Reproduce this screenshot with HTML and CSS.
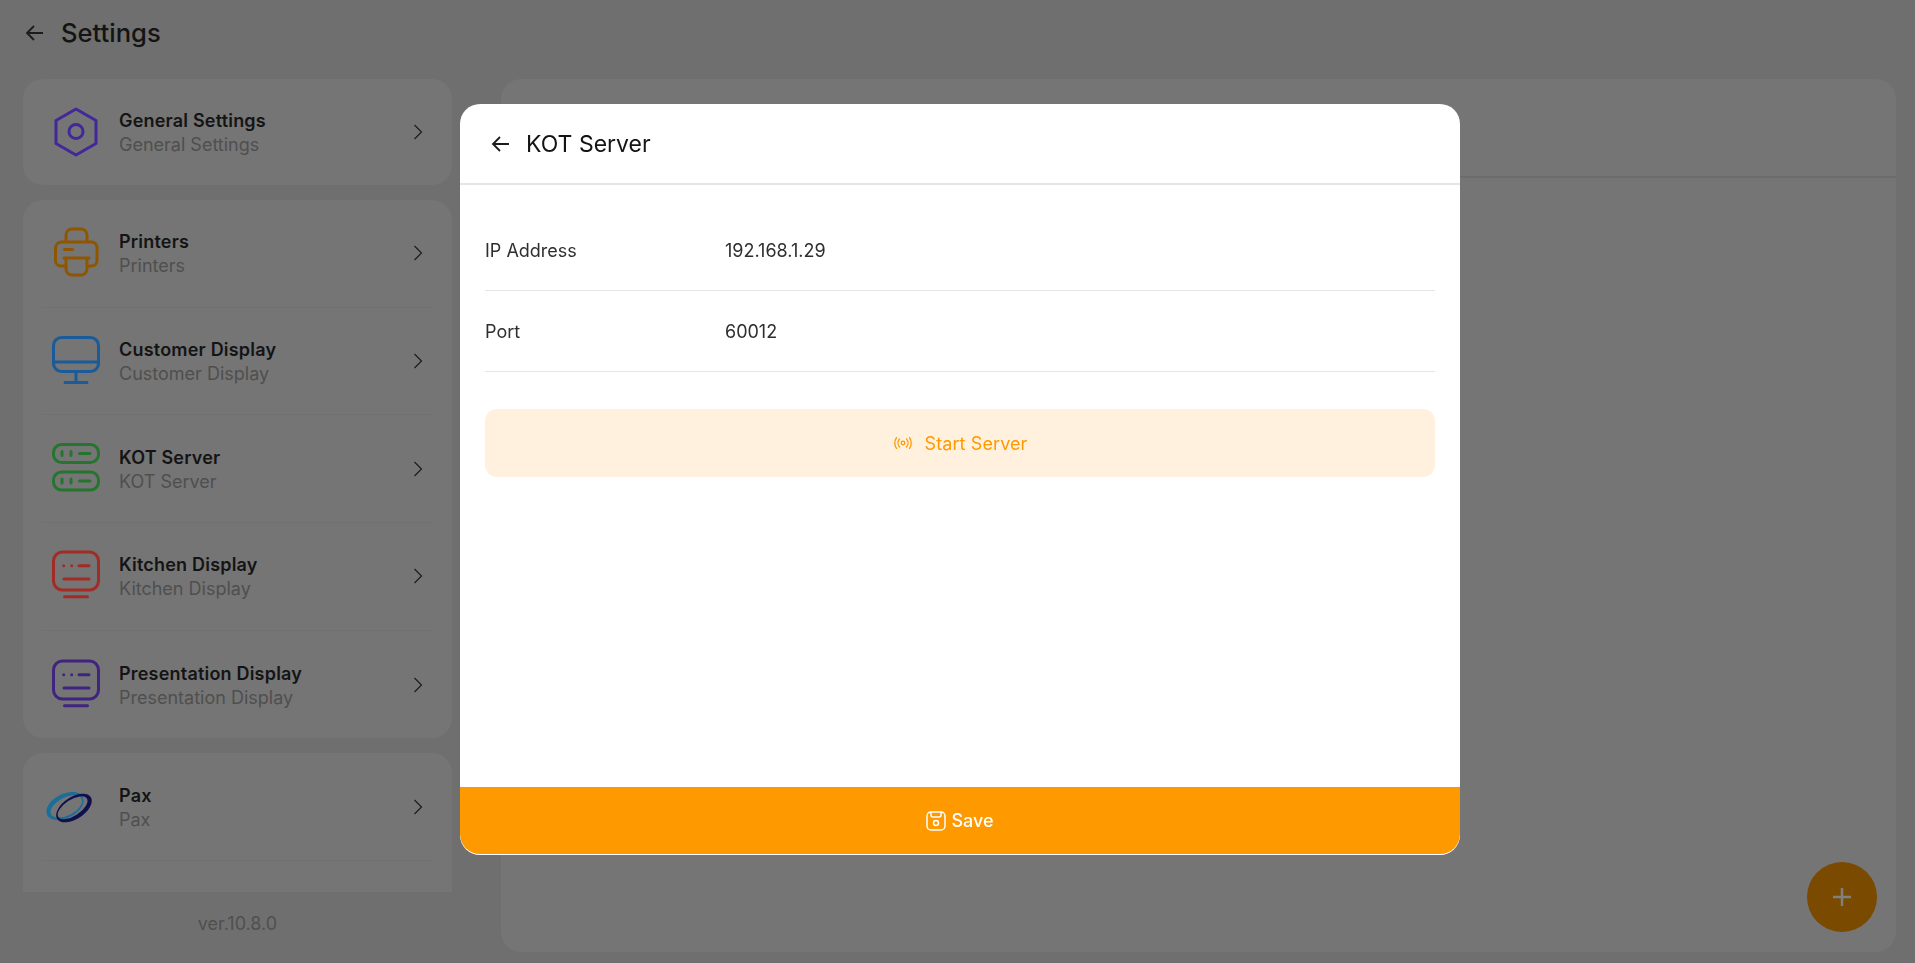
FILE: index.html
```html
<!DOCTYPE html>
<html lang="en">
<head>
    <meta charset="UTF-8">
    <meta name="viewport" content="width=device-width, initial-scale=1.0">
    <title>Settings</title>
    <link rel="stylesheet" href="styles.css">
</head>
<body>
    <div class="page">
        <header class="topbar">
            <svg class="back-icon" viewBox="0 0 24 24"><path d="M20 12H4M11 5l-7 7 7 7"/></svg>
            <h1>Settings</h1>
        </header>
        <div class="content">
            <aside class="sidebar">
                <div class="sidebar-scroll">
                    <div class="card">
                        <div class="item">
                            <svg class="item-icon icon-purple" viewBox="0 0 48 48"><path d="M24 1l20 11.500v23L24 47 4 35.500v-23z"/><circle cx="24" cy="23.500" r="7"/></svg>
                            <div class="item-text"><strong>General Settings</strong><span>General Settings</span></div>
                            <svg class="chevron" viewBox="0 0 10 16"><path d="M1.500 1l7 7-7 7"/></svg>
                        </div>
                    </div>
                    <div class="card">
                        <div class="item">
                            <svg class="item-icon icon-orange" viewBox="0 0 48 48"><path d="M14 13V6a6 6 0 0 1 6-6h9a6 6 0 0 1 6 6v7M14 37H9a5.500 5.500 0 0 1-5.500-5.500V19A6 6 0 0 1 9 13h31a5.500 5.500 0 0 1 5 6v12.500a5.500 5.500 0 0 1-5.500 5.500H35M12 29h25M14 29v11a6 6 0 0 0 6 6h9a6 6 0 0 0 6-6V29M12.500 20.500h8"/></svg>
                            <div class="item-text"><strong>Printers</strong><span>Printers</span></div>
                            <svg class="chevron" viewBox="0 0 10 16"><path d="M1.500 1l7 7-7 7"/></svg>
                        </div>
                        <div class="item">
                            <svg class="item-icon icon-blue" viewBox="0 0 48 48"><rect x="1.500" y=".5" width="45" height="34" rx="8"/><path d="M1.500 25h45M24 35v10M13 45.500h22"/></svg>
                            <div class="item-text"><strong>Customer Display</strong><span>Customer Display</span></div>
                            <svg class="chevron" viewBox="0 0 10 16"><path d="M1.500 1l7 7-7 7"/></svg>
                        </div>
                        <div class="item">
                            <svg class="item-icon icon-green" viewBox="0 0 48 48"><rect x="1.500" y="-.5" width="45" height="18" rx="8"/><rect x="1.500" y="27" width="45" height="18" rx="8"/><path d="M10 6.500v4M19 6.500v4M27.500 8.500h10.500M10 34v4M19 34v4M27.500 36h10.500"/></svg>
                            <div class="item-text"><strong>KOT Server</strong><span>KOT Server</span></div>
                            <svg class="chevron" viewBox="0 0 10 16"><path d="M1.500 1l7 7-7 7"/></svg>
                        </div>
                        <div class="item">
                            <svg class="item-icon icon-red" viewBox="0 0 48 48"><rect x="1.500" y="0" width="45" height="38" rx="9"/><path d="M11.700 13.700h.01M19.700 13.700h.01M27 13.700h10M12 27h25M12.500 44.700h23"/></svg>
                            <div class="item-text"><strong>Kitchen Display</strong><span>Kitchen Display</span></div>
                            <svg class="chevron" viewBox="0 0 10 16"><path d="M1.500 1l7 7-7 7"/></svg>
                        </div>
                        <div class="item">
                            <svg class="item-icon icon-indigo" viewBox="0 0 48 48"><rect x="1.500" y="0" width="45" height="38" rx="9"/><path d="M11.700 13.700h.01M19.700 13.700h.01M27 13.700h10M12 27h25M12.500 44.700h23"/></svg>
                            <div class="item-text"><strong>Presentation Display</strong><span>Presentation Display</span></div>
                            <svg class="chevron" viewBox="0 0 10 16"><path d="M1.500 1l7 7-7 7"/></svg>
                        </div>
                    </div>
                    <div class="card">
                        <div class="item">
                            <svg class="item-icon pax-logo" viewBox="0 0 48 48">
                                <path class="pax-teal" transform="translate(13 23) rotate(-27)" d="M-20 0a20 12 0 1 0 40 0a20 12 0 1 0-40 0zM-16 1a17 9 0 1 0 34 0a17 9 0 1 0-34 0z"/>
                                <path class="pax-navy" transform="translate(22 25) rotate(-33)" d="M-20 0a20 11 0 1 0 40 0a20 11 0 1 0-40 0zM-18-1a17 8 0 1 0 34 0a17 8 0 1 0-34 0z"/>
                            </svg>
                            <div class="item-text"><strong>Pax</strong><span>Pax</span></div>
                            <svg class="chevron" viewBox="0 0 10 16"><path d="M1.500 1l7 7-7 7"/></svg>
                        </div>
                        <div class="item"></div>
                    </div>
                </div>
                <div class="version">ver.10.8.0</div>
            </aside>
            <main class="panel">
                <div class="panel-head"></div>
                <button class="fab"><svg viewBox="0 0 20 20"><path d="M10 1v18M1 10h18"/></svg></button>
            </main>
        </div>
    </div>

    <div class="overlay">
        <div class="modal">
            <div class="modal-head">
                <svg class="back-icon" viewBox="0 0 24 24"><path d="M20 12H4M11 5l-7 7 7 7"/></svg>
                <h2>KOT Server</h2>
            </div>
            <div class="modal-body">
                <div class="field"><label>IP Address</label><span>192.168.1.29</span></div>
                <div class="field"><label>Port</label><span>60012</span></div>
                <button class="start-btn">
                    <svg viewBox="0 0 20 12"><circle cx="10" cy="6" r="1.800"/><path d="M6.500 2a6 6 0 0 0 0 8M13.500 2a6 6 0 0 1 0 8M3.500.6a10 10 0 0 0 0 10.800M16.500.6a10 10 0 0 1 0 10.800"/></svg>
                    Start Server
                </button>
            </div>
            <button class="save-btn">
                <svg viewBox="0 0 20 20"><rect x="1" y="1" width="18" height="18" rx="4"/><path d="M5 1v3a2 2 0 0 0 2 2h6a2 2 0 0 0 2-2V1"/><circle cx="10" cy="12" r="2.500"/></svg>
                Save
            </button>
        </div>
    </div>
</body>
</html>
```

FILE: styles.css
```css
* {
    box-sizing: border-box;
}
body {
    margin: 0;
    height: 963px;
    overflow: hidden;
    font-family: Inter, "Liberation Sans", sans-serif;
    background-color: #6f6f6f;
    color: #141414;
}
.page {
    height: 100%;
    display: flex;
    flex-direction: column;
}
.topbar {
    height: 79px;
    padding: 0 0 14px 23px;
    display: flex;
    align-items: center;
    gap: 14px;
}
.topbar h1 {
    margin: 0;
    font-size: 25.600px;
    font-weight: 500;
}
.back-icon {
    width: 24px;
    height: 24px;
    fill: none;
    stroke: #1c1c1e;
    stroke-width: 1.800;
}
.content {
    flex: 1;
    display: flex;
    padding: 0 19px 11px 23px;
    gap: 49px;
    min-height: 0;
}
.sidebar {
    width: 429px;
    display: flex;
    flex-direction: column;
}
.sidebar-scroll {
    height: 813px;
    overflow: hidden;
    display: flex;
    flex-direction: column;
    gap: 15px;
}
.card {
    background-color: #757575;
    border-radius: 20px;
    flex-shrink: 0;
}
.item {
    height: 107.700px;
    margin: 0 19px;
    padding: 0 10px;
    display: flex;
    align-items: center;
    border-bottom: 1px solid #707070;
}
.card > .item:last-child {
    border-bottom: none;
}
.card:first-child .item {
    height: 106px;
}
.item-icon {
    width: 48px;
    height: 48px;
    flex-shrink: 0;
    fill: none;
    stroke-width: 3;
    stroke-linecap: round;
    stroke-linejoin: round;
    overflow: visible;
}
.icon-purple { stroke: #43289a; }
.icon-orange { stroke: #8f5600; }
.icon-blue { stroke: #1b5b99; }
.icon-green { stroke: #26752f; }
.icon-red { stroke: #a32b25; }
.icon-indigo { stroke: #3f2480; }
.pax-teal { fill: #1a6f9a; fill-rule: evenodd; stroke: none; }
.pax-navy { fill: #10104f; fill-rule: evenodd; stroke: none; }
.item-text {
    flex: 1;
    margin-left: 19px;
    padding-top: 2px;
    display: flex;
    flex-direction: column;
}
.item-text strong {
    font-size: 18px;
    font-weight: 600;
    letter-spacing: 0.2px;
    line-height: 24px;
}
.item-text span {
    font-size: 18px;
    line-height: 24px;
    color: #4f4f4f;
}
.chevron {
    width: 10px;
    height: 16px;
    fill: none;
    stroke: #1c1c1e;
    stroke-width: 1.200;
}
.version {
    flex: 1;
    padding-top: 2px;
    display: flex;
    align-items: center;
    justify-content: center;
    font-size: 18px;
    color: #4f4f4f;
}
.panel {
    flex: 1;
    background-color: #757575;
    border-radius: 20px;
    position: relative;
}
.panel-head {
    height: 99px;
    border-bottom: 2px solid #6c6c6c;
}
.fab {
    position: absolute;
    right: 19px;
    bottom: 20px;
    width: 70px;
    height: 70px;
    border: none;
    border-radius: 50%;
    background-color: #7a4a00;
    display: flex;
    align-items: center;
    justify-content: center;
}
.fab svg {
    width: 20px;
    height: 20px;
    fill: none;
    stroke: #808080;
    stroke-width: 2.500;
}
.overlay {
    position: fixed;
    top: 0;
    left: 0;
    width: 100%;
    height: 100%;
    display: flex;
    justify-content: center;
    padding: 104px 0 0 5px;
}
.modal {
    width: 1000px;
    height: 751px;
    padding-bottom: 1px;
    background: #fff;
    border-radius: 20px;
    overflow: hidden;
    display: flex;
    flex-direction: column;
}
.modal-head {
    height: 81px;
    padding-left: 29px;
    display: flex;
    align-items: center;
    gap: 13px;
    border-bottom: 2px solid #e5e5e5;
}
.modal-head h2 {
    margin: 0;
    font-size: 23px;
    font-weight: 400;
}
.modal-body {
    flex: 1;
    padding: 25px 25px;
}
.field {
    height: 81px;
    display: flex;
    align-items: center;
    font-size: 18px;
    color: #2e2e2e;
    border-bottom: 1px solid #e5e5e5;
}
.field label {
    width: 240px;
}
.start-btn {
    width: 100%;
    height: 68px;
    margin-top: 37px;
    border: none;
    border-radius: 12px;
    background-color: #fff1dd;
    color: #ff9900;
    font-family: inherit;
    font-size: 18px;
    letter-spacing: 0.100px;
    display: flex;
    align-items: center;
    justify-content: center;
    gap: 12px;
}
.start-btn svg {
    width: 20px;
    height: 12px;
    fill: none;
    stroke: #ff9900;
    stroke-width: 1.300;
    stroke-linecap: round;
}
.save-btn {
    height: 67px;
    flex-shrink: 0;
    border: none;
    border-radius: 0 0 20px 20px;
    background-color: #ff9900;
    color: #fff;
    font-family: inherit;
    font-size: 18px;
    font-weight: 500;
    display: flex;
    align-items: center;
    justify-content: center;
    gap: 5px;
}
.save-btn svg {
    width: 20px;
    height: 20px;
    fill: none;
    stroke: #fff;
    stroke-width: 1.500;
}
```
